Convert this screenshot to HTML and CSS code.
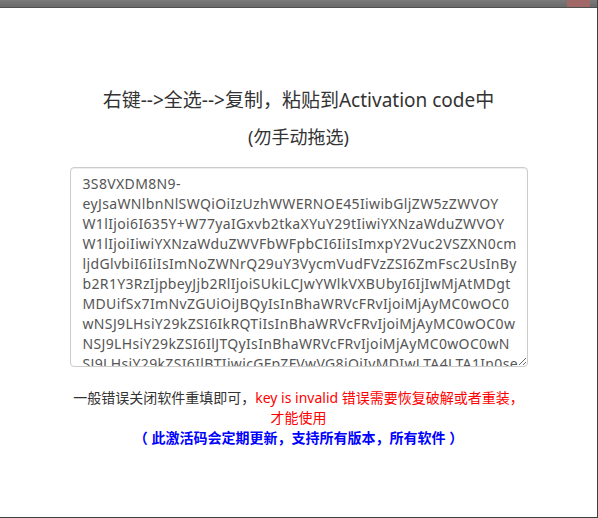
FILE: index.html
```html
<!DOCTYPE html>
<html lang="zh-CN">
<head>
    <meta charset="UTF-8">
    <meta name="viewport" content="width=device-width, initial-scale=1.0">
    <title>Activation code</title>
    <link rel="stylesheet" href="styles.css">
</head>
<body>
    <div class="frame">
        <div class="titlebar">
            <span class="close-btn"></span>
        </div>

        <div class="panel">
            <h2 class="title">右键--&gt;全选--&gt;复制，粘贴到Activation code中</h2>
            <p class="subtitle">(勿手动拖选)</p>

            <textarea class="code-box" readonly>3S8VXDM8N9-
eyJsaWNlbnNlSWQiOiIzUzhWWERNOE45IiwibGljZW5zZWVOY
W1lIjoi6I635Y+W77yaIGxvb2tkaXYuY29tIiwiYXNzaWduZWVOY
W1lIjoiIiwiYXNzaWduZWVFbWFpbCI6IiIsImxpY2Vuc2VSZXN0cm
ljdGlvbiI6IiIsImNoZWNrQ29uY3VycmVudFVzZSI6ZmFsc2UsInBy
b2R1Y3RzIjpbeyJjb2RlIjoiSUkiLCJwYWlkVXBUbyI6IjIwMjAtMDgt
MDUifSx7ImNvZGUiOiJBQyIsInBhaWRVcFRvIjoiMjAyMC0wOC0
wNSJ9LHsiY29kZSI6IkRQTiIsInBhaWRVcFRvIjoiMjAyMC0wOC0w
NSJ9LHsiY29kZSI6IlJTQyIsInBhaWRVcFRvIjoiMjAyMC0wOC0wN
SJ9LHsiY29kZSI6IlBTIiwicGFpZFVwVG8iOiIyMDIwLTA4LTA1In0se
yJjb2RlIjoiUlNGIiwicGFpZFVwVG8iOiIyMDIwLTA4LTA1In0seyJjb
2RlIjoiR08iLCJwYWlkVXBUbyI6IjIwMjAtMDgtMDUifV19</textarea>

            <div class="notes">
                <p class="note">一般错误关闭软件重填即可，<span class="warn">key is invalid 错误需要恢复破解或者重装，才能使用</span></p>
                <p class="note notice">（ 此激活码会定期更新，支持所有版本，所有软件 ）</p>
            </div>
        </div>
    </div>
</body>
</html>
```

FILE: styles.css
```css
body, html {
    margin: 0;
    padding: 0;
    background-color: #ffffff;
    font-family: "Noto Sans", "Noto Sans CJK SC", sans-serif;
}

.frame {
    width: 597px;
    height: 517px;
    border-right: 1px solid #404040;
    border-bottom: 1px solid #404040;
    background-color: #ffffff;
}

.titlebar {
    height: 7px;
    background: linear-gradient(#7a7a7a, #6a6a6a);
    border-bottom: 1px solid #505050;
    display: flex;
    justify-content: flex-end;
    padding-right: 7px;
}

.close-btn {
    width: 23px;
    height: 7px;
    background-color: #a16868;
}

.panel {
    width: 458px;
    margin: 0 auto;
    padding-top: 79px;
    text-align: center;
}

.title {
    margin: 0;
    font-size: 19px;
    font-weight: normal;
    line-height: 26px;
    color: #333333;
}

.subtitle {
    margin: 12px 0 0 0;
    font-size: 18px;
    line-height: 24px;
    color: #333333;
}

.code-box {
    display: block;
    box-sizing: border-box;
    width: 458px;
    height: 200px;
    margin-top: 18px;
    padding: 6px 12px;
    border: 1px solid #cccccc;
    border-radius: 4px;
    box-shadow: inset 0 1px 1px rgba(0, 0, 0, 0.075);
    font-family: "Noto Sans", "Noto Sans CJK SC", sans-serif;
    font-size: 14px;
    letter-spacing: 0.35px;
    line-height: 20px;
    color: #555555;
    white-space: pre;
    overflow: hidden;
    resize: vertical;
}

.notes {
    margin-top: 21px;
}

.note {
    margin: 0;
    font-size: 14px;
    line-height: 20px;
    color: #333333;
}

.warn {
    color: #ff0000;
}

.notice {
    color: #0000ff;
    font-weight: bold;
}
```
